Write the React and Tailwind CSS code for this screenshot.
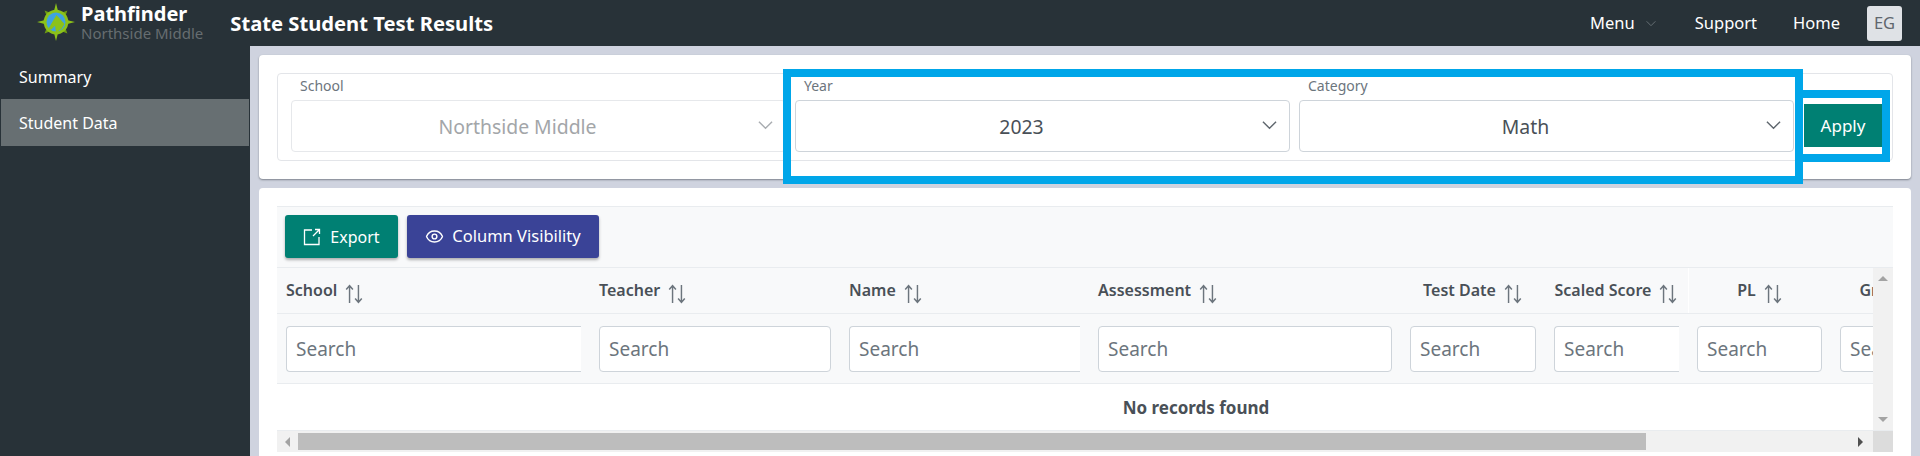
import { Eye } from "lucide-react";

const columns = [
  { label: "School", width: "w-[313px]", align: "text-left", clipped: true },
  { label: "Teacher", width: "w-[250px]", align: "text-left" },
  { label: "Name", width: "w-[249px]", align: "text-left", clipped: true },
  { label: "Assessment", width: "w-[312px]", align: "text-left" },
  { label: "Test Date", width: "w-[144px]", align: "text-center" },
  { label: "Scaled Score", width: "w-[143px]", align: "text-center", clipped: true },
  { label: "PL", width: "w-[143px]", align: "text-center" },
  { label: "Grade", width: "w-[131px]", align: "text-center" },
];

const Chevron = ({ className }) => (
  <svg viewBox="0 0 16 10" className={className} fill="none" stroke="currentColor" strokeWidth="1.5">
    <path d="M1 1.5 8 8.5 15 1.5" />
  </svg>
);

const SortIcon = () => (
  <svg viewBox="0 0 18 18" className="w-[20px] h-[20px] inline-block ml-[7px] -mb-[4px] text-[#6c757d]" fill="none" stroke="currentColor" strokeWidth="1.3">
    <path d="M5 17V2M2 5l3-3.500 3 3.500" />
    <path d="M13 1v15M10 13l3 3.500 3-3.500" />
  </svg>
);

const ExportIcon = () => (
  <svg viewBox="0 0 18 18" className="w-[18px] h-[18px]" fill="none" stroke="currentColor" strokeWidth="1.3">
    <path d="M9 2H1.500v14.500H16V9" />
    <path d="M10 8 16 2M12 1.500h4.500V6" />
  </svg>
);

const Logo = () => (
  <svg viewBox="0 0 40 40" className="w-[38px] h-[38px]">
    <path d="M20 0 22.500 10H17.500ZM20 40 17.500 30H22.500ZM0 20 10 17.500V22.500ZM40 20 30 22.500V17.500Z" fill="#8cc21a" />
    <path d="M8 8 16 11 11 16ZM32 8 29 16 24 11ZM32 32 24 29 29 24ZM8 32 11 24 16 29Z" fill="#6f9c12" />
    <circle cx="20" cy="20" r="13" fill="#8cc21a" />
    <circle cx="20" cy="20" r="10" fill="#3fa3e0" />
    <path d="M12 27 20.500 12.500 29 22 26 27 20 31 19 24 15 28Z" fill="#8cc21a" />
  </svg>
);

const Field = ({ label, value, disabled }) => (
  <div className="w-[495px]">
    <div className="h-[26px] pl-[9px] text-[14px] leading-[24px] text-[#6c757d]">{label}</div>
    <div className={`h-[52px] flex items-center rounded-[4px] border bg-white ${disabled ? "border-[#e6e8eb]" : "border-[#ced4da]"}`}>
      <span className={`flex-1 text-center text-[19.400px] pl-[1px] pt-[1px] ${disabled ? "text-[#a3a6a9]" : "text-[#495057]"}`}>{value}</span>
      <Chevron className={`w-[15px] h-[10px] mr-[12px] mb-[2px] ml-[16px] ${disabled ? "text-[#a9adb1]" : "text-[#5f676e]"}`} />
    </div>
  </div>
);

const Sidebar = () => (
  <aside className="w-[250px] shrink-0 bg-[#283238] pt-[6px] text-white text-[16px]">
    <div className="h-[47px] pl-[19px] pt-[2px] flex items-center">Summary</div>
    <div className="h-[47px] ml-[1px] w-[248px] pl-[18px] flex items-center bg-[#676f72]">Student Data</div>
  </aside>
);

const Header = () => (
  <header className="h-[46px] bg-[#283238] flex items-center text-white">
    <div className="ml-[37px] mt-[-2px]"><Logo /></div>
    <div className="ml-[6px]">
      <div className="text-[20px] font-bold leading-[20px]">Pathfinder</div>
      <div className="text-[15px] leading-[18px] text-[#666d70]">Northside Middle</div>
    </div>
    <h1 className="ml-[27px] mt-[1px] text-[20.200px] font-bold">State Student Test Results</h1>
    <nav className="ml-auto flex items-center text-[16.500px]">
      <span>Menu</span>
      <Chevron className="w-[10px] h-[7px] ml-[11px] text-[#6a7378]" />
      <span className="ml-[39px]">Support</span>
      <span className="ml-[36px]">Home</span>
      <span className="ml-[27px] mr-[18px] w-[35px] h-[35px] rounded-[3px] bg-[#dfe2e6] text-[#5f676e] flex items-center justify-center">EG</span>
    </nav>
  </header>
);

const Filters = () => (
  <section className="relative h-[124px] rounded-[4px] bg-white shadow-[0_1px_2px_#7d828c] px-[18px] pt-[18px]">
    <div className="h-[88px] rounded-[4px] border border-[#e3e5e9] flex pl-[13px]">
      <div className="flex gap-[9px]">
        <Field label="School" value="Northside Middle" disabled />
        <Field label="Year" value="2023" />
        <Field label="Category" value="Math" />
      </div>
      <button className="ml-[10px] mt-[30px] w-[78px] h-[43px] bg-[#008073] text-white text-[17px]">Apply</button>
    </div>
    {/* highlight boxes drawn over the form */}
    <div className="absolute left-[524px] top-[14px] w-[1020px] h-[115px] border-[8px] border-[#00a6e9]" />
    <div className="absolute left-[1544px] top-[35px] w-[87px] h-[72px] border-[8px] border-l-0 border-[#00a6e9]" />
  </section>
);

const ResultsTable = () => (
  <section className="mt-[9px] flex-1 rounded-t-[4px] bg-white px-[18px] pt-[18px]">
    <div className="h-[61px] bg-[#f8f9fa] border-t border-[#e9ecef] flex items-start gap-[9px] pl-[8px] pt-[8px]">
      <button className="h-[43px] w-[113px] rounded-[3px] bg-[#008073] text-white text-[16px] flex items-center justify-center gap-[9px] shadow-[0_2px_3px_#0000004d]">
        <ExportIcon />Export
      </button>
      <button className="h-[43px] w-[192px] rounded-[3px] bg-[#3a4397] text-white text-[16.500px] flex items-center justify-center gap-[8px] shadow-[0_2px_3px_#0000004d]">
        <Eye className="w-[19px] h-[19px]" strokeWidth={1.8} />Column Visibility
      </button>
    </div>
    <div className="flex h-[163px] border-t border-[#e9ecef]">
      <div className="flex-1 min-w-0 overflow-hidden">
        <div className="w-[1838px]">
          <div className="flex h-[46px] bg-[#f8f9fa] border-b border-[#e9ecef]">
            {columns.map((col) => (
              <div key={col.label} className={`${col.width} shrink-0 px-[9px] pt-[10px] text-[16px] font-semibold whitespace-nowrap text-[#495057] ${col.align} ${col.label === "PL" ? "border-l border-white" : ""}`}>
                {col.label}<SortIcon />
              </div>
            ))}
          </div>
          <div className="flex h-[70px] bg-[#f8f9fa] border-b border-[#e9ecef]">
            {columns.map((col) => (
              <div key={col.label} className={`${col.width} shrink-0 px-[9px] pt-[12px]`}>
                <input placeholder="Search" className={`w-full h-[46px] rounded-[4px] border border-[#ced4da] bg-white px-[9px] text-[19px] placeholder:text-[#6c757d] ${col.clipped ? "border-r-0 rounded-r-none" : ""}`} />
              </div>
            ))}
          </div>
          <div className="h-[47px] flex items-center justify-center text-[17px] font-bold text-[#495057]">No records found</div>
        </div>
      </div>
      <div className="w-[20px] shrink-0 bg-[#f1f1f1] flex flex-col items-center justify-between py-[8px]">
        <div className="w-0 h-0 border-x-[5px] border-x-transparent border-b-[5px] border-b-[#a3a3a3]" />
        <div className="w-0 h-0 border-x-[5px] border-x-transparent border-t-[5px] border-t-[#a3a3a3]" />
      </div>
    </div>
    <div className="flex h-[22px] bg-[#f1f1f1] border-t border-[#e9ecef]">
      <div className="w-[21px] flex items-center justify-center">
        <div className="w-0 h-0 border-y-[5px] border-y-transparent border-r-[5px] border-r-[#a3a3a3]" />
      </div>
      <div className="w-[1348px] my-[2px] bg-[#bdbdbd]" />
      <div className="flex-1 flex items-center justify-end pr-[10px]">
        <div className="w-0 h-0 border-y-[5px] border-y-transparent border-l-[5px] border-l-[#505050]" />
      </div>
      <div className="w-[20px] bg-[#dcdcdc]" />
    </div>
  </section>
);

export default function App() {
  return (
    <div className="h-[456px] w-[1920px] overflow-hidden flex flex-col bg-[#283238] font-['Noto_Sans',sans-serif]">
      <Header />
      <div className="flex flex-1 min-h-0">
        <Sidebar />
        <main className="flex-1 min-w-0 flex flex-col bg-[#cfd3df] pt-[9px] pl-[9px] pr-[9px]">
          <Filters />
          <ResultsTable />
        </main>
      </div>
    </div>
  );
}
